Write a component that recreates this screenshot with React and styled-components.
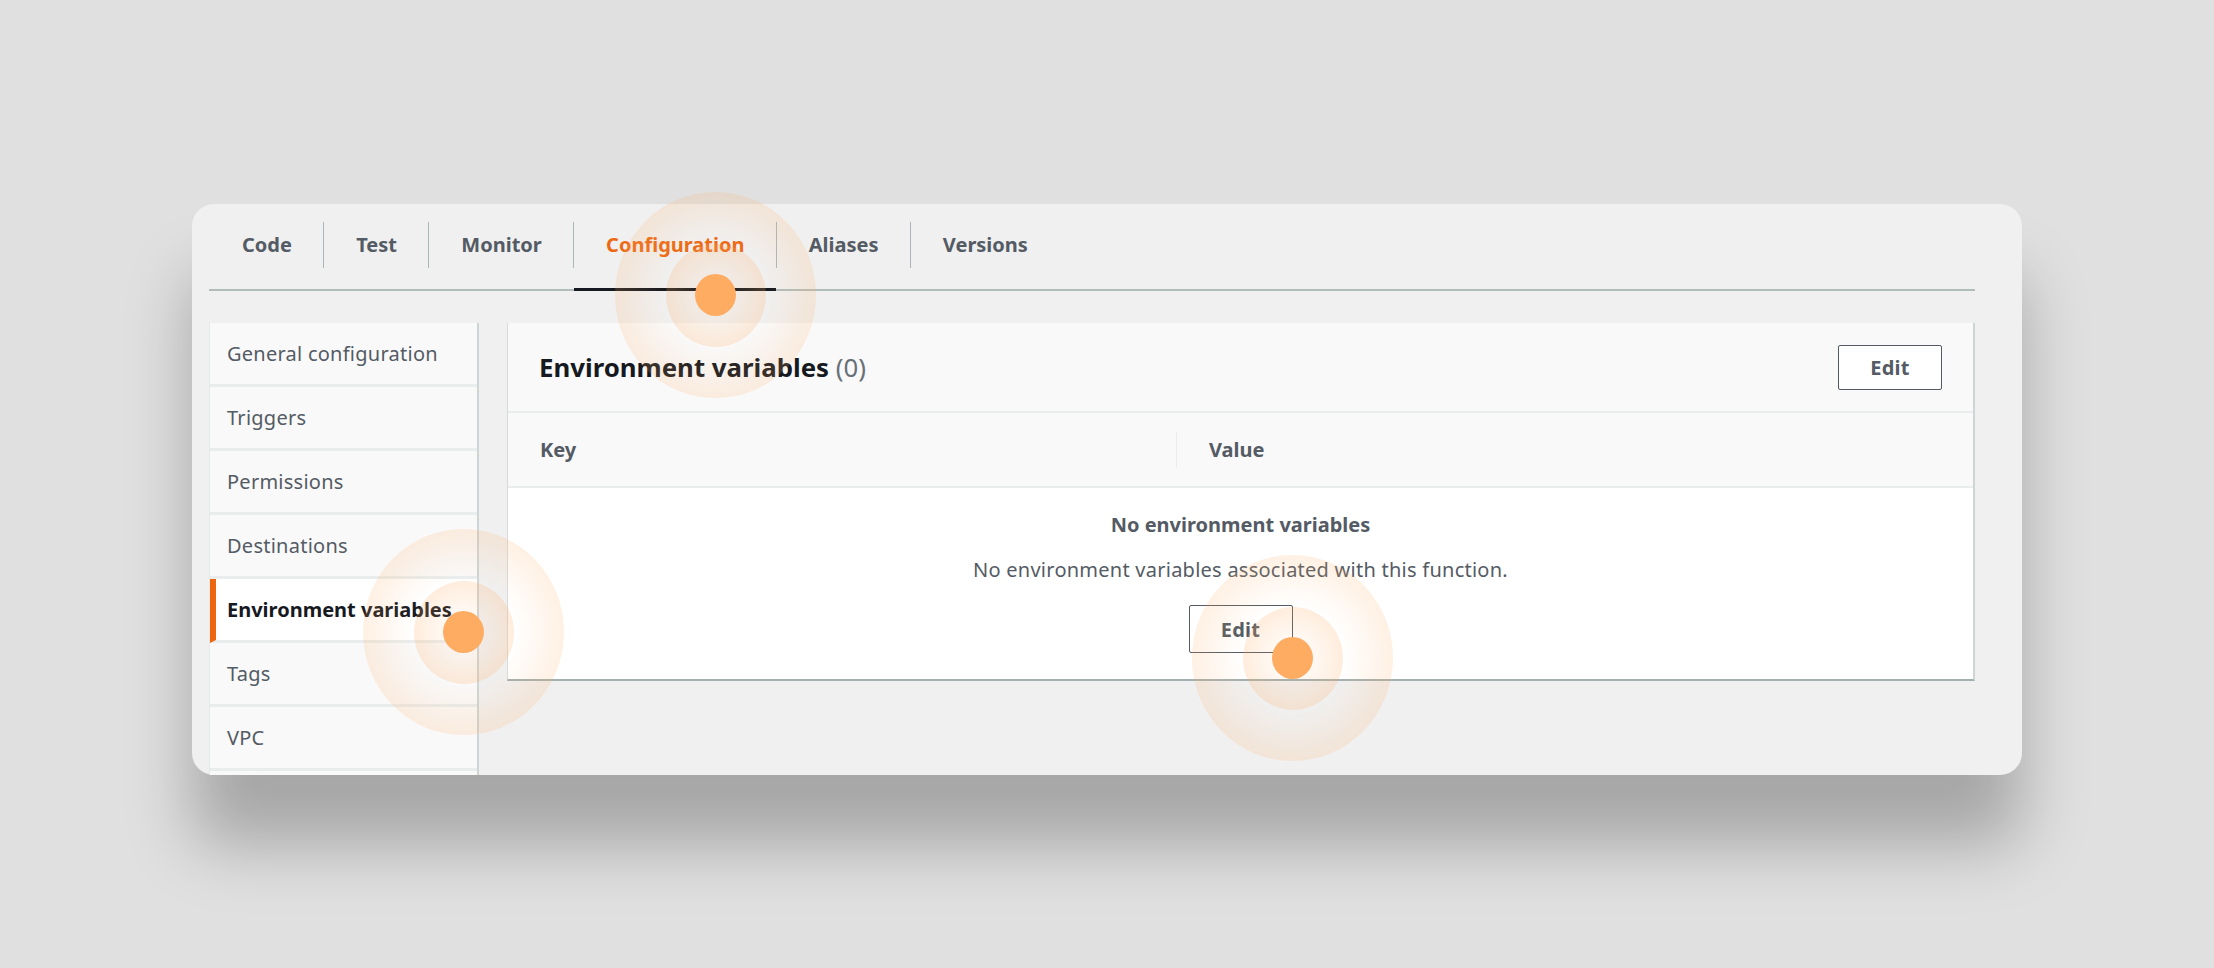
import React from "react";
import styled, { createGlobalStyle } from "styled-components";

const GlobalStyle = createGlobalStyle`
  html, body {
    margin: 0;
    background: #e0e0e0;
    font-family: "Noto Sans", "Open Sans", sans-serif;
  }
`;

const Page = styled.div`
  width: 2214px;
  height: 968px;
  padding: 204px 0 0 192px;
  box-sizing: border-box;
  overflow: hidden;
`;

const Card = styled.div`
  position: relative;
  width: 1830px;
  height: 571px;
  padding: 0 47px 0 17px;
  box-sizing: border-box;
  display: flex;
  flex-direction: column;
  background: #f0f0f0;
  border-radius: 22px;
  box-shadow: 0 70px 66px rgba(0, 0, 0, 0.26);
`;

const TabBar = styled.div`
  display: flex;
  height: 87px;
  flex: none;
  padding-top: 18px;
  box-sizing: border-box;
  border-bottom: 2px solid #b0bdbb;
`;

const Tab = styled.div`
  position: relative;
  height: 46px;
  padding: 0 31.3px 2px ${p => (p.$first ? 33 : 32)}px;
  box-sizing: border-box;
  display: flex;
  align-items: center;
  font-size: 20px;
  font-weight: 700;
  color: ${p => (p.$active ? "#ec6a14" : "#545b64")};
  border-right: ${p => (p.$last ? "none" : "1.5px solid #aab7b8")};

  ${p => p.$active && `
    &::after {
      content: "";
      position: absolute;
      left: 0;
      right: 0;
      bottom: -23px;
      height: 3px;
      background: #16191f;
    }
  `}
`;

const Body = styled.div`
  flex: 1;
  min-height: 0;
  overflow: hidden;
  display: flex;
  align-items: flex-start;
  gap: 28px;
  padding-top: 32px;
`;

const SideNav = styled.div`
  width: 270px;
  height: 100%;
  flex: none;
  background: #f9f9f9;
  border-right: 2px solid #cdd5d5;
  border-left: 1px solid #e4e8e8;
  box-sizing: border-box;
`;

const NavItem = styled.div`
  height: 64px;
  box-sizing: border-box;
  display: flex;
  align-items: center;
  padding: 0 0 0 ${p => (p.$active ? 11 : 17)}px;
  font-size: 20px;
  letter-spacing: ${p => (p.$active ? 0 : 0.25)}px;
  font-weight: ${p => (p.$active ? 700 : 400)};
  color: ${p => (p.$active ? "#16191f" : "#545b64")};
  background: ${p => (p.$active ? "#fff" : "transparent")};
  border-left: ${p => (p.$active ? "6px solid #ec6610" : "none")};
  border-bottom: 3px solid #e9eded;
`;

const Panel = styled.div`
  flex: 1;
  background: #fff;
  border-left: 1px solid #d5dbdb;
  border-right: 2px solid #cdd5d5;
  border-bottom: 2px solid #a3b0b1;
`;

const PanelHeader = styled.div`
  height: 90px;
  padding: 0 31px 0 31px;
  box-sizing: border-box;
  display: flex;
  align-items: center;
  justify-content: space-between;
  background: #f9f9f9;
  border-bottom: 2px solid #eaeded;
`;

const Title = styled.h2`
  margin: 0;
  font-size: 25.8px;
  font-weight: 700;
  color: #16191f;

  span {
    font-weight: 400;
    color: #687078;
  }
`;

const EditButton = styled.button`
  width: 104px;
  height: ${p => (p.$tall ? 48 : 45)}px;
  padding: 0;
  background: #fff;
  border: 1.5px solid #545b64;
  border-radius: 2px;
  font-family: inherit;
  font-size: 20px;
  letter-spacing: 0.3px;
  font-weight: 700;
  color: #545b64;
`;

const ColumnRow = styled.div`
  height: 75px;
  box-sizing: border-box;
  display: grid;
  grid-template-columns: 668px 1fr;
  align-items: center;
  background: #f9f9f9;
  border-bottom: 2px solid #eaeded;
`;

const Column = styled.div`
  font-size: 20px;
  font-weight: 700;
  color: #545b64;
  padding-left: 32px;
  line-height: 36px;
  border-left: ${p => (p.$divided ? "1.5px solid #eaeded" : "none")};
`;

const Empty = styled.div`
  height: 191px;
  padding-top: 19px;
  box-sizing: border-box;
  display: flex;
  flex-direction: column;
  align-items: center;
`;

const EmptyTitle = styled.div`
  font-size: 20px;
  font-weight: 700;
  line-height: 36px;
  color: #545b64;
`;

const EmptyText = styled.div`
  margin: 9px 0 17px;
  font-size: 20px;
  letter-spacing: 0.25px;
  line-height: 36px;
  color: #545b64;
`;

const Hotspot = styled.div`
  position: absolute;
  left: ${p => p.$x}px;
  top: ${p => p.$y}px;
  width: 201px;
  height: 206px;
  margin: -103px 0 0 -100px;
  border-radius: 50%;
  display: flex;
  align-items: center;
  justify-content: center;
  background: radial-gradient(closest-side, rgba(255, 172, 99, 0) 50%, rgba(255, 172, 99, 0.18) 100%);
`;

const HotspotMid = styled.div`
  width: 100px;
  height: 103px;
  border-radius: 50%;
  display: flex;
  align-items: center;
  justify-content: center;
  background: radial-gradient(closest-side, rgba(255, 172, 99, 0.05) 30%, rgba(255, 172, 99, 0.22) 100%);
`;

const HotspotDot = styled.div`
  width: 41px;
  height: 42px;
  border-radius: 50%;
  background: #ffac63;
`;

const tabs = ["Code", "Test", "Monitor", "Configuration", "Aliases", "Versions"];
const navItems = ["General configuration", "Triggers", "Permissions", "Destinations", "Environment variables", "Tags", "VPC"];
const hotspots = [
  { x: 523, y: 91 },
  { x: 271, y: 428 },
  { x: 1100, y: 454 }
];

function App() {
  return (
    <Page>
      <GlobalStyle />
      <Card>
        <TabBar>
          {tabs.map((t, i) => (
            <Tab key={t} $first={i === 0} $last={i === tabs.length - 1} $active={t === "Configuration"}>
              {t}
            </Tab>
          ))}
        </TabBar>
        <Body>
          <SideNav>
            {navItems.map(n => (
              <NavItem key={n} $active={n === "Environment variables"}>{n}</NavItem>
            ))}
          </SideNav>
          <Panel>
            <PanelHeader>
              <Title>Environment variables <span>(0)</span></Title>
              <EditButton>Edit</EditButton>
            </PanelHeader>
            <ColumnRow>
              <Column>Key</Column>
              <Column $divided>Value</Column>
            </ColumnRow>
            <Empty>
              <EmptyTitle>No environment variables</EmptyTitle>
              <EmptyText>No environment variables associated with this function.</EmptyText>
              <EditButton $tall>Edit</EditButton>
            </Empty>
          </Panel>
        </Body>
        {hotspots.map(h => (
          <Hotspot key={h.x} $x={h.x} $y={h.y}>
            <HotspotMid>
              <HotspotDot />
            </HotspotMid>
          </Hotspot>
        ))}
      </Card>
    </Page>
  );
}

export default App;
